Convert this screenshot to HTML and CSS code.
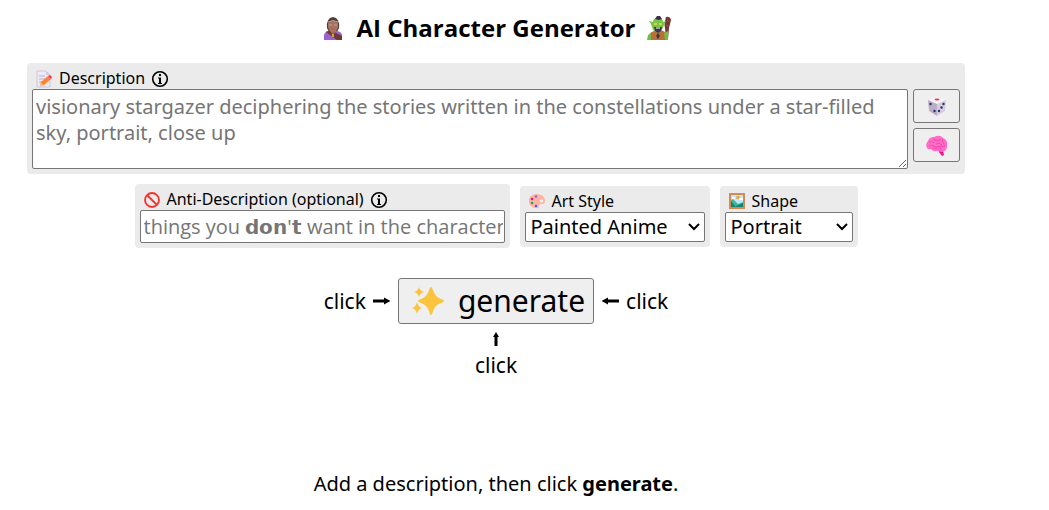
FILE: index.html
```html
<!DOCTYPE html>
<html lang="en">
<head>
<meta charset="utf-8">
<meta name="viewport" content="width=device-width, initial-scale=1">
<title>AI Character Generator</title>
<link rel="stylesheet" href="styles.css">
</head>
<body>
<svg class="defs" aria-hidden="true">
  <symbol id="info" viewBox="0 0 18 18"><circle cx="9" cy="9" r="7.3" fill="none" stroke="#000" stroke-width="1.6"/><path d="M8 4h2v2H8zM7 7.500h3V13h1v1H7v-1h1V8.500H7z"/></symbol>
  <symbol id="arrow" viewBox="0 0 18 10"><path d="M0 3.500h11V1.500L17.500 5 11 8.500V6.500H0z"/></symbol>
</svg>
<main class="page">
  <h1 class="title">
    <svg class="face" viewBox="0 0 24 24" aria-hidden="true">
      <path d="M6 12Q5 2 12 1q7 1 6 11l-2 4H8z" fill="#543b36"/>
      <path d="M3 24v-5q1-4 6-4h6q5 0 6 4v5z" fill="#9b62cd"/>
      <path d="M5 16q3-2 6-1l10 5v4h-5z" fill="#6b3c2f"/>
      <path d="M10 13h4v4l-2 2-2-2z" fill="#8e5c4b"/>
      <path d="M7 7q5-5 10 0v4q-1 5-5 6-4-1-5-6z" fill="#a87360"/>
      <path d="M7 6q5-3 10 0" fill="none" stroke="#a9a0a0"/>
      <path d="M8 9h3M13 9h3" stroke="#b9a0a0"/>
      <path d="M10 13h4" stroke="#c2534f"/>
      <path d="M12 18v3" stroke="#f2c54b" stroke-width="1.500"/>
    </svg>
    <span>AI Character Generator</span>
    <svg class="face" viewBox="0 0 24 24" aria-hidden="true">
      <path d="M19 1q4-1 5 3l-2 8-1 11h-2l-1-11q-1-3 0-7z" fill="#73382f"/>
      <path d="M20 4l2 2M19 9l2 1" stroke="#9b5a4c"/>
      <path d="M2 24l1-7 6-3h5l6 3v7z" fill="#b97032"/>
      <path d="M0 24l1-5 3-2v7zM17 17l4-2v9h-3z" fill="#72bd45"/>
      <path d="M4 8L2 5l4 1q0-4 5-4t5 4l3-1-2 4-2 5-4 3-5-3z" fill="#78c447"/>
      <path d="M8 3l2-3h3l2 3-3 1z" fill="#3a3043"/>
      <path d="M7 11h8l-1 4-3 2-3-2z" fill="#403450"/>
      <path d="M7 8h3M12 8h3" stroke="#f6d842" stroke-width="1.500"/>
      <path d="M9 12h4" stroke="#fff"/>
      <path d="M11 17l2 3-2 3-2-3z" fill="#403450"/>
    </svg>
  </h1>

  <section class="panel description">
    <div class="caption">
      <svg class="icon" viewBox="0 0 18 18" aria-hidden="true">
        <path d="M2 1h9l4 4v12H2z" fill="#eee9f4" stroke="#cfc5dc"/>
        <path d="M11 1v4h4" fill="#d3c9df"/>
        <path d="M4 6h6M4 9h7M4 12h3" stroke="#b9adc8"/>
        <path d="M5 16l1-4 7-6 3 3-7 6z" fill="#ff822d"/>
        <path d="M13 6l2-1 2 2-1 2z" fill="#f92f60"/>
        <path d="M5 16l1-3 2 2z" fill="#ffce7c"/>
      </svg>
      <label for="description">Description</label>
      <svg class="info" role="img" aria-label="Info"><use href="#info"/></svg>
    </div>
    <div class="editor">
      <textarea class="field prompt" id="description" placeholder="visionary stargazer deciphering the stories written in the constellations under a star-filled sky, portrait, close up"></textarea>
      <div class="tools">
        <button class="button tool" type="button" aria-label="Random description">
          <svg class="tool-icon" viewBox="0 0 22 22" aria-hidden="true">
            <path d="M11 2l9 3-9 4-9-4z" fill="#f8f5fb"/>
            <path d="M2 5l9 4v12l-8-5z" fill="#b9afc6"/>
            <path d="M20 5l-9 4v12l8-5z" fill="#d6cde0"/>
            <ellipse cx="11" cy="4.500" rx="2.500" ry="1" fill="#f03a3a"/>
            <g fill="#352b66"><circle cx="4.500" cy="9" r="1.200"/><circle cx="8.500" cy="16" r="1.200"/><circle cx="17.500" cy="9" r="1.200"/><circle cx="15.500" cy="12.500" r="1.200"/><circle cx="13" cy="16" r="1.200"/></g>
          </svg>
        </button>
        <button class="button tool" type="button" aria-label="Improve description">
          <svg class="tool-icon" viewBox="0 0 22 22" aria-hidden="true">
            <path d="M13 16l4 1 1 4-2 1-3-4z" fill="#f70a8d"/>
            <path d="M1 14Q-1 10 2 7q1-4 6-4 6-3 9 1 5 2 4 8 0 5-5 6l-5-1q-4 1-6-2-3 1-4-1z" fill="#ff6dc6"/>
            <path d="M3 8q4-1 5 1M8 4q0 3 4 3l3-2M17 5q-2 2 1 5M10 10q3-2 6 1M3 12q4-2 7 1l5-1q2 2 5-1M6 15q2-3 5 0M14 13q-1 3 2 4" fill="none" stroke="#f93cab" stroke-width=".8"/>
          </svg>
        </button>
      </div>
    </div>
  </section>

  <div class="options">
    <section class="panel anti">
      <div class="caption">
        <svg class="icon" viewBox="0 0 18 18" aria-hidden="true"><circle cx="9" cy="9" r="7" fill="none" stroke="#f8312f" stroke-width="1.800"/><path d="M4 4l10 10" stroke="#f8312f" stroke-width="1.800"/></svg>
        <label for="anti">Anti-Description (optional)</label>
        <svg class="info" role="img" aria-label="Info"><use href="#info"/></svg>
      </div>
      <input class="field line" id="anti" type="text" placeholder="things you 𝗱𝗼𝗻'𝘁 want in the character image">
    </section>
    <section class="panel">
      <div class="caption">
        <svg class="icon" viewBox="0 0 18 18" aria-hidden="true">
          <path d="M1 10Q0 3 8 2q8 0 9 6 0 5-4 4-2 0-2 2 0 3-4 2-5-1-6-6z" fill="#ffb3a4"/>
          <circle cx="13.500" cy="9" r="1.800" fill="#ebebeb"/>
          <circle cx="8" cy="4.500" r="1.200" fill="#8d65c5"/><circle cx="4" cy="7" r="1.300" fill="#f70a8d"/><circle cx="4" cy="11" r="1.300" fill="#00b26b"/><circle cx="8" cy="14" r="1.200" fill="#3f5fff"/>
        </svg>
        <label for="style">Art Style</label>
      </div>
      <div class="select-box">
        <select class="field choice style" id="style"><option>Painted Anime</option></select>
        <svg class="chevron" viewBox="0 0 12 8" aria-hidden="true"><path d="M1 1l5 5 5-5"/></svg>
      </div>
    </section>
    <section class="panel">
      <div class="caption">
        <svg class="icon" viewBox="0 0 18 18" aria-hidden="true">
          <path d="M1 1h16v16H1z" fill="#d38b56"/><path d="M3 3h12v12H3z" fill="#b9e8ff"/>
          <circle cx="10" cy="5.500" r="1.800" fill="#ff9d2d"/><path d="M3 8l2-1 5 5 5-2v5H3z" fill="#44b698"/><path d="M3 9l5 6H3zM8 14l7-3v4H8z" fill="#128575"/><path d="M4 6h3M11 7h4" stroke="#fff" stroke-width="2"/>
        </svg>
        <label for="shape">Shape</label>
      </div>
      <div class="select-box">
        <select class="field choice shape" id="shape"><option>Portrait</option></select>
        <svg class="chevron" viewBox="0 0 12 8" aria-hidden="true"><path d="M1 1l5 5 5-5"/></svg>
      </div>
    </section>
  </div>

  <div class="action">
    <span class="hint">click <svg class="arrow" aria-hidden="true"><use href="#arrow"/></svg></span>
    <button class="button generate" type="button">
      <svg class="sparkles" viewBox="0 0 32 32" aria-hidden="true"><path fill="#fcc33c" d="M19 2q1 0 2 3 2 7 8 9 3 1 3 2t-3 2q-6 2-8 8-1 4-2 4t-2-4q-2-6-8-8-3-1-3-2t3-2q6-2 8-9 1-3 2-3zM7 2q1 4 5 5-4 1-5 5-1-4-5-5 4-1 5-5zM5 17q1 5 5 6-4 1-5 6-1-5-5-6 4-1 5-6z"/></svg>
      <span>generate</span>
    </button>
    <span class="hint"><svg class="arrow left" aria-hidden="true"><use href="#arrow"/></svg> click</span>
  </div>
  <div class="below">
    <svg class="up" viewBox="0 0 8 16" aria-hidden="true"><path d="M2.500 15V6H1l3-5 3 5H5.500v9z"/></svg>
    <span>click</span>
  </div>

  <p class="status">Add a description, then click <b>generate</b>.</p>
</main>
</body>
</html>
```
FILE: styles.css
```css
* { box-sizing: border-box; }

body {
  margin: 0;
  background: #fff;
  color: #000;
  font: 20px/26px "Noto Sans", "Open Sans", sans-serif;
}

.defs { display: none; }

.page {
  display: flex;
  flex-direction: column;
  align-items: center;
  padding: 11px 84px 12px 27px;
}

.title {
  display: flex;
  align-items: center;
  gap: 12px;
  margin: 0 0 18px;
  font-family: "Open Sans", "Noto Sans", sans-serif;
  font-size: 24px;
  line-height: 34px;
}

.face { width: 24px; height: 24px; }

.panel {
  padding: 5px;
  border-radius: 4px;
  background: #ebebeb;
}

.description { width: 100%; }

.caption {
  display: flex;
  align-items: center;
  gap: 6px;
  height: 21px;
  padding-left: 3px;
  font-size: 16px;
  line-height: 21px;
}

.icon { width: 18px; height: 18px; }
.info { width: 18px; height: 18px; }

.editor { display: flex; gap: 5px; }

.field {
  display: block;
  margin: 0;
  border: 1px solid #767676;
  border-radius: 2px;
  background: #fff;
  color: #000;
  font: inherit;
}

.field::placeholder { color: #757575; opacity: 1; }

.prompt {
  flex: 1;
  min-width: 0;
  height: 80px;
  padding: 4px 3px;
  resize: both;
}

.tools {
  display: flex;
  flex-direction: column;
  gap: 5px;
}

.button {
  display: flex;
  align-items: center;
  justify-content: center;
  border: 1px solid #767676;
  border-radius: 3px;
  background: #efefef;
  color: #000;
  font: inherit;
}

.tool { width: 47px; height: 34px; padding: 0; }
.tool-icon { width: 22px; height: 22px; }

.options {
  display: flex;
  flex-wrap: wrap;
  align-items: center;
  justify-content: center;
  gap: 10px;
  margin-top: 10px;
}

.anti { width: 375px; }

.line {
  width: 100%;
  height: 33px;
  padding: 2px 1px 2px 3px;
  font-family: "Open Sans", "Noto Sans", sans-serif;
}

.select-box { position: relative; }

.choice {
  height: 30px;
  padding: 0 24px 0 5px;
  line-height: 28px;
  appearance: none;
}

.style { width: 180px; }
.shape { width: 128px; }

.chevron {
  position: absolute;
  top: 11px;
  right: 5px;
  width: 12px;
  height: 8px;
  fill: none;
  stroke: #000;
  stroke-width: 2;
  pointer-events: none;
}

.action {
  display: flex;
  align-items: center;
  gap: 7px;
  margin-top: 30px;
}

.hint {
  display: flex;
  align-items: center;
  gap: 7px;
  font-size: 21px;
}

.arrow { width: 18px; height: 10px; }
.left { transform: rotate(180deg); }

.generate {
  gap: 14px;
  height: 46px;
  padding: 0 8px 0 13px;
  font-size: 30px;
  line-height: 40px;
}

.sparkles { width: 32px; height: 32px; }

.below {
  display: flex;
  flex-direction: column;
  align-items: center;
  gap: 5px;
  margin-top: 7px;
  font-size: 21px;
}

.up { width: 8px; height: 16px; }

.status { margin: 93px 0 0; }
```
